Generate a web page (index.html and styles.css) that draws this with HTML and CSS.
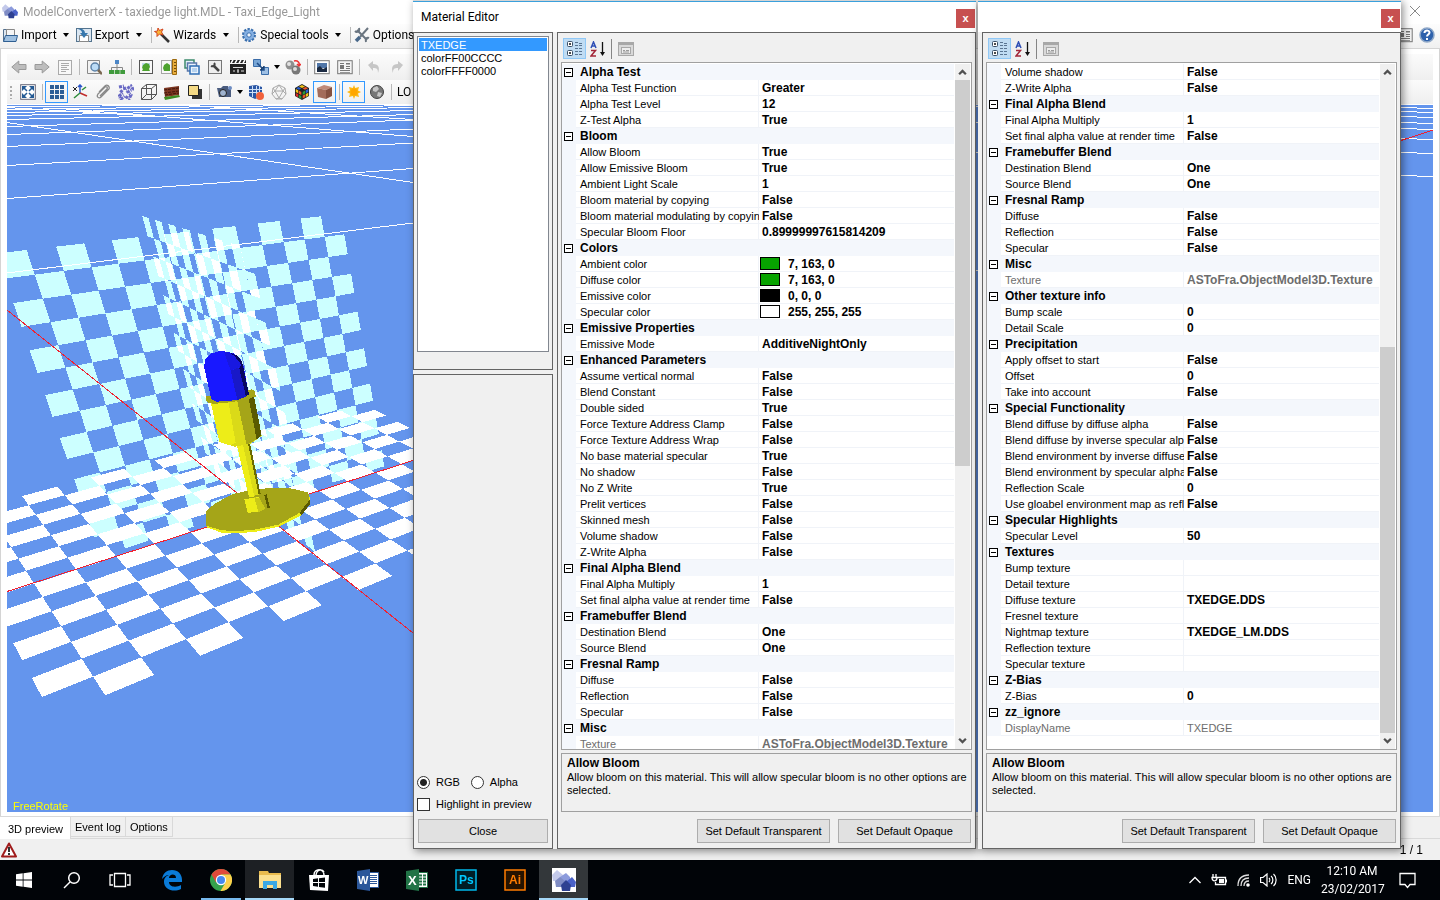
FILE: index.html
```
<!DOCTYPE html>
<html lang="en">
<head>
    <meta charset="UTF-8">
    <meta name="viewport" content="width=device-width, initial-scale=1.0">
    <title>ModelConverterX</title>
    <link rel="stylesheet" href="styles.css">
</head>
<body>
    <svg class="defs" width="0" height="0">
        <symbol id="i-houses" viewBox="0 0 24 24"><path fill="#c3c9ea" d="M0 7l5-5 6 5-1 6H1z"/><path fill="#8c9bdc" d="M8 9l6-4 4 4v7H8z"/><path fill="#7f8cc4" d="M3 13l5-4 5 4v6H4z"/><path fill="#4a62c8" d="M14 14l6-5 4 5-1 5h-8z"/><path fill="#2e4191" d="M9 17l5-5 5 5-1 6h-8z"/></symbol>
        <symbol id="i-cat" viewBox="0 0 18 18"><g fill="#fff" stroke="#3a5068"><rect x="1.500" y="1.500" width="5" height="5" rx="1"/><rect x="1.500" y="10.500" width="5" height="5" rx="1"/></g><path stroke="#111" d="M3 4h2M4 3v2M3 13h2M4 12v2"/><path stroke="#5a7592" stroke-dasharray="3 1" d="M9 2.500h4M9 5.500h8M9 8.500h8M9 11.500h8M9 14.500h8M13 3.500h4"/></symbol>
        <symbol id="i-az" viewBox="0 0 16 16"><path fill="none" stroke="#2f4fb5" stroke-width="1.500" d="M1 7l2.500-6L6 7M2 5h3"/><path fill="none" stroke="#a32638" stroke-width="1.500" d="M1 9.500h4.500L1 15h5"/><path stroke="#111" stroke-width="1.300" d="M12.500 1v12"/><path fill="#111" d="M10 11h5l-2.500 4z"/></symbol>
        <symbol id="i-page" viewBox="0 0 16 16"><rect x=".5" y="1.500" width="15" height="13" fill="#d9d9d9" stroke="#a8a8a8"/><path fill="#a8a8a8" d="M1 2h14v2H1z"/><rect x="3.500" y="6.500" width="9" height="6" fill="#eee" stroke="#a8a8a8"/><path stroke="#999" d="M5 9.500h2M8 9.500h3M5 11h6"/></symbol>
        <symbol id="i-up" viewBox="0 0 8 8"><path fill="none" stroke="#505050" stroke-width="2" d="M1 6l3-3 3 3"/></symbol>
        <symbol id="i-down" viewBox="0 0 8 8"><path fill="none" stroke="#505050" stroke-width="2" d="M1 2l3 3 3-3"/></symbol>
        <symbol id="i-news" viewBox="0 0 16 16"><rect x=".7" y="1.700" width="14.500" height="13" fill="#f4f4f4" stroke="#777"/><path fill="#777" d="M3 4h4v1H3zM3 6h4v4H3zM3 11h10v1H3zM3 13h10v.8H3zM9 4h4v1.500H9zM9 7h4v1H9zM9 9h4v1H9z"/></symbol>
    </svg>

    <div class="desktop">
        <main class="app">
            <header class="app-title">
                <svg class="ico"><use href="#i-houses"/></svg>
                <h1>ModelConverterX - taxiedge light.MDL - Taxi_Edge_Light</h1>
                <button class="app-close" aria-label="Close"><svg viewBox="0 0 12 12" width="12" height="12"><path stroke="#888" d="M1 1l10 10M11 1L1 11"/></svg></button>
            </header>

            <nav class="menu">
                <button><svg class="ico" viewBox="0 0 16 16"><path fill="#dce6f0" stroke="#53708f" d="M1.500 14.500v-12h5l1 2h5v3"/><path fill="#f6f6f6" stroke="#888" d="M4.500 2.500h8v6h-8z"/><path fill="#9fc0e0" stroke="#2f5f92" d="M3.500 8.500h12l-1.500 6H1.500z"/></svg>Import</button><i class="drop"></i>
                <button><svg class="ico" viewBox="0 0 16 16"><rect x=".5" y="1.500" width="15" height="13" fill="#dbe7f2" stroke="#54748f"/><path fill="#fff" stroke="#888" d="M3.500 8.500h9v6h-9z"/><path fill="#3878ad" d="M2 2c4-1 7 1 7 4h3l-4 5-4-5h2c0-2-1-3-4-4z"/></svg>Export</button><i class="drop"></i>
                <i class="sep"></i>
                <button><svg class="ico" viewBox="0 0 16 16"><path stroke="#333" stroke-width="2.500" d="M7 7l8 8"/><path fill="#f8b437" stroke="#d3431d" d="M4 1l1.500 2.500L9 2 7.500 5 9 8 5.500 7 3 9.500 3 6 .5 4.500 3.500 4z"/></svg>Wizards</button><i class="drop"></i>
                <i class="sep"></i>
                <button><svg class="ico" viewBox="0 0 16 16"><circle cx="8" cy="8" r="5.500" fill="#6fa0d8" stroke="#3a6fae" stroke-width="3" stroke-dasharray="2.200 1.200"/><circle cx="8" cy="8" r="5" fill="#85b0e2"/><circle cx="8" cy="8" r="2.200" fill="#eef4fb" stroke="#3a6fae"/></svg>Special tools</button><i class="drop"></i>
                <i class="sep"></i>
                <button><svg class="ico" viewBox="0 0 16 16"><path stroke="#6a7580" stroke-width="2" d="M3 3l10 10M14 1L6 10"/><path stroke="#49688a" stroke-width="3.500" d="M6 10l-4 4"/><path fill="none" stroke="#6a7580" stroke-width="2" d="M1 4c2 2 5 0 4-3M12 15c-1-3 1-5 3-4"/></svg>Options</button>
                <span class="menu-right">
                    <svg class="ico"><use href="#i-news"/></svg>
                    <svg class="ico" viewBox="0 0 16 16"><circle cx="8" cy="8" r="7" fill="#2f62ac" stroke="#8fa8c8" stroke-width="1.500"/><path fill="none" stroke="#fff" stroke-width="2" d="M5.500 6c0-3.500 5-3.200 5-.5 0 2-2.500 2-2.500 4M8 11v2"/></svg>
                </span>
            </nav>

            <div class="workspace">
                <div class="tools">
                    <button><svg class="ico" viewBox="0 0 16 16"><path fill="#bdbdbd" stroke="#999" d="M.8 8l7-6v3.500H15v5H7.800V14z"/></svg></button>
                    <button><svg class="ico" viewBox="0 0 16 16"><path fill="#bdbdbd" stroke="#999" d="M15.200 8l-7-6v3.500H1v5h7.200V14z"/></svg></button>
                    <button><svg class="ico" viewBox="0 0 16 16"><rect x="1.500" y="1.500" width="13" height="14" fill="#f8f8f8" stroke="#aaa"/><path stroke="#aaa" d="M4 4.500h8M4 6.500h8M4 8.500h6M4 10.500h8M4 12.500h5"/></svg></button>
                    <i class="sep"></i>
                    <button><svg class="ico" viewBox="0 0 16 16"><path fill="#f2f2f2" stroke="#888" d="M1.500 1.500h12v13h-12z"/><circle cx="9" cy="8" r="4" fill="#bcdcf6" stroke="#5d83a8" stroke-width="1.500"/><path stroke="#7a6852" stroke-width="2.500" d="M12 11l4 4"/></svg></button>
                    <button><svg class="ico" viewBox="0 0 16 16"><path fill="none" stroke="#888" d="M8 5v3M2.500 11V8.500h11V11M8 8v3"/><path fill="#4c86c6" d="M6 1h4v4H6z"/><path fill="#3f9a3c" d="M0 11h5v4H0zM5.700 11h5v4h-5zM11.300 11H16v4h-4.700z"/></svg></button>
                    <i class="sep"></i>
                    <button><svg class="ico" viewBox="0 0 16 16"><rect x="1.500" y="1.500" width="13" height="13" fill="#f8f8f8" stroke="#555"/><path fill="#bcd9ee" d="M4 4h8v4H4z"/><path fill="#4da22f" d="M4 9l1-3 3-2 3 1 1 3-1 2 1 2H4l1-2z"/></svg></button>
                    <button><svg class="ico" viewBox="0 0 16 16"><rect x=".5" y="1.500" width="10" height="13" fill="#f8f8f8" stroke="#555" stroke-dasharray="1 1"/><path fill="#4da22f" d="M2 9l1-3 3-2 3 2v6H3z"/><path fill="#e9ad3d" stroke="#9c6a10" d="M11.500.5h4v15h-4z"/><path stroke="#704c0a" d="M13 3.500h2M13 6.500h2M13 9.500h2M13 12.500h2"/></svg></button>
                    <button><svg class="ico" viewBox="0 0 16 16"><g fill="#e9f2fb" stroke-width="1.500"><path stroke="#3c8a6c" d="M1 1h9v8H1z"/><path stroke="#5b78aa" d="M3.500 4h9v8h-9z"/><path stroke="#2e6db5" d="M6 7h9v8H6z"/></g><path fill="#b5d2ef" d="M8 9h5v4H8z"/></svg></button>
                    <button><svg class="ico" viewBox="0 0 16 16"><rect x="1.500" y="1.500" width="13" height="13" fill="#eee" stroke="#777"/><path stroke="#444" stroke-width="2.500" d="M7 7l5 5"/><path fill="none" stroke="#444" stroke-width="2" d="M4 7c2 1 5-1 3-3"/></svg></button>
                    <button><svg class="ico" viewBox="0 0 16 16"><path fill="#222" d="M0 5h16v10H0zM0 1h16v3H0z"/><path stroke="#fff" stroke-width="1.500" d="M3 1l-2 3M7 1L5 4M11 1L9 4M15 1l-2 3"/><path stroke="#ddd" d="M3 8.500h10M3 12h2M7 12h2M8 10v4M11 12h3"/></svg></button>
                    <button><svg class="ico" viewBox="0 0 16 16"><path fill="#78a6d6" stroke="#3a6ca8" d="M.5.5h7v7h-7z"/><path fill="#9dbfe4" stroke="#3a6ca8" d="M8.500 8.500h7v7h-7z"/><path stroke="#1f4c86" stroke-width="1.500" d="M4 4l7 7M11 7v4H7"/></svg></button><i class="drop small"></i>
                    <button><svg class="ico" viewBox="0 0 16 16"><circle cx="5" cy="6" r="4.500" fill="#8f8f8f"/><circle cx="4" cy="5" r="2" fill="#e2e2e2"/><circle cx="11" cy="11" r="4.500" fill="#777"/><circle cx="10" cy="10" r="2" fill="#ddd"/><path fill="none" stroke="#e33" stroke-width="1.500" d="M9 2c4-1 6 2 5 5M12 5l2 2 2-2"/></svg></button>
                    <i class="sep"></i>
                    <button><svg class="ico" viewBox="0 0 16 16"><rect x=".7" y="1.700" width="14.500" height="13" fill="#fff" stroke="#777"/><path fill="#5076a8" d="M3 4h10v5H3z"/><path fill="#1b2a42" d="M3 9l3-2 3 3 4-2v5H3z"/></svg></button>
                    <button><svg class="ico"><use href="#i-news"/></svg></button>
                    <i class="sep"></i>
                    <button><svg class="ico" viewBox="0 0 16 16"><path fill="#c6c6c6" d="M2 6l5-4v3c6 0 7 4 5 9 0-4-1-5-5-5v3z"/></svg></button>
                    <button><svg class="ico" viewBox="0 0 16 16"><path fill="#c6c6c6" d="M14 6L9 2v3c-6 0-7 4-5 9 0-4 1-5 5-5v3z"/></svg></button>
                </div>
                <div class="tools">
                    <i class="grip"></i>
                    <button><svg class="ico" viewBox="0 0 16 16"><rect x=".7" y=".7" width="14.600" height="14.600" fill="#fff" stroke="#667"/><path fill="#245a94" d="M2 2h5L2 7zM14 2v5L9 2zM2 14V9l5 5zM14 14H9l5-5z"/><path stroke="#245a94" stroke-width="1.500" d="M4 4l3 3M12 4L9 7M4 12l3-3M12 12L9 9"/></svg></button>
                    <i class="sep"></i>
                    <button class="on"><svg class="ico" viewBox="0 0 16 16"><path fill="#2d5e96" d="M1 1h4v4H1zM6 1h4v4H6zM11 1h4v4h-4zM1 6h4v4H1zM6 6h4v4H6zM11 6h4v4h-4zM1 11h4v4H1zM6 11h4v4H6zM11 11h4v4h-4z"/></svg></button>
                    <button><svg class="ico" viewBox="0 0 16 16"><path stroke="#2a56c8" stroke-width="1.500" d="M8 9V1M6 3l2-2 2 2"/><path stroke="#c12c2c" stroke-width="1.500" d="M8 9l7 3"/><path stroke="#2e8d3b" stroke-width="1.500" d="M8 9l-6 5M10 6l4-3"/><path stroke="#222" d="M1 3l4 4M5 3L1 7"/></svg></button>
                    <button><svg class="ico" viewBox="0 0 16 16"><path fill="none" stroke="#888" stroke-width="1.300" d="M5 12l7-7c1-2-1-3-2-2L3 10c-2 3 1 5 3 3l8-8c1-3-2-5-4-3L4 8"/></svg></button>
                    <button><svg class="ico" viewBox="0 0 16 16"><path fill="none" stroke="#6868c4" stroke-width="3" stroke-dasharray="3 1 1 1" d="M1 3l5-1 1 4 6-4 2 3-5 3 3 3-2 4-4-3-4 3-2-3 4-3-3-3"/></svg></button>
                    <button><svg class="ico" viewBox="0 0 16 16"><path fill="none" stroke="#555" d="M.5 4.500h10v11H.5zM5.500.5h10v10h-10zM.5 4.500l5-4M10.500 4.500l5-4M10.500 15.500l5-5M.5 15.500l5-5"/></svg></button>
                    <button><svg class="ico" viewBox="0 0 16 16"><path fill="#7c3520" d="M0 4l15-2v9L1 13z"/><path fill="#3d8a22" d="M0 13l15-2 1 2-15 3z"/><path stroke="#42170c" stroke-dasharray="3 1" d="M0 6l15-2M0 9l15-2M1 11l14-2"/></svg></button>
                    <button><svg class="ico" viewBox="0 0 16 16"><path fill="#333" d="M5 5h10v10H5z"/><path fill="#f5da85" stroke="#222" d="M1.500 1.500h10v10h-10z"/></svg></button>
                    <i class="sep"></i>
                    <button><svg class="ico" viewBox="0 0 16 16"><path fill="#4b5d80" d="M1 4h4l2-2h5v3h3v8H3z"/><circle cx="7" cy="9" r="3.500" fill="#9fb3cf" stroke="#222"/><circle cx="14" cy="4" r="2" fill="#6d8cc2"/></svg></button><i class="drop small"></i>
                    <button><svg class="ico" viewBox="0 0 16 16"><path fill="#2b57a5" d="M1 2l7-1 6 2v9l-7 3-6-3z"/><path stroke="#cfe0f6" d="M1 5.500h13M1 8.500h13M4.500 2v11M8.500 2v12M11.500 2v11"/><circle cx="12" cy="12" r="4" fill="#f0613c"/></svg></button>
                    <button><svg class="ico" viewBox="0 0 16 16"><path fill="none" stroke="#aaa" d="M8 1l6 3 1 6-4 5H5l-4-5 1-6zM8 1L4 7l-3 3M8 1l4 6 3 3M4 7h8l-4 7zM2 4l2 3M14 4l-2 3M5 15l3-1 3 1"/></svg></button>
                    <button><svg class="ico" viewBox="0 0 16 16"><path fill="#222" d="M8 0l7 4v8l-7 4-7-4V4z"/><path fill="#f4c518" d="M8 1l3 1.500-3 1.500-3-1.500zM1.800 5l2.400 1.200v3L1.800 8z"/><path fill="#f0572a" d="M11.500 3l2.500 1.200-3 1.500L8.500 4.500zM4.800 6.500L7.300 8v3L4.800 9.700zM8.700 11.500l2.500-1.300v3l-2.500 1.400z"/><path fill="#d92a2a" d="M1.800 9l2.400 1.300v3L1.800 12z"/><path fill="#2a62d8" d="M4.500 3l2.700 1.500L5 5.700 2.200 4.300zM11.800 6.300L14.300 5v3l-2.500 1.300z"/><path fill="#2ba03a" d="M8.700 8l2.500-1.400v3L8.700 11zM4.800 10.700l2.500 1.200v3l-2.500-1.300z"/><path fill="#f4c518" d="M11.800 10l2.500-1.300v3L11.800 13z"/></svg></button>
                    <button class="on"><svg class="ico" viewBox="0 0 16 16"><path fill="#c08a78" d="M0 4l7-3 8 2-6 3z"/><path fill="#a36c5a" d="M0 4l9 2v9l-8-2z"/><path fill="#84503f" d="M9 6l6-3v9l-6 3z"/></svg></button>
                    <i class="sep"></i>
                    <button class="on"><svg class="ico" viewBox="0 0 16 16"><path fill="#fdb813" d="M8 1l1.200 3L13 3l-1 3.500L15 8l-3 1.500 1 3.500-3.800-1L8 15l-1.200-3L3 13l1-3.500L1 8l3-1.500L3 3l3.800 1z"/><circle cx="8" cy="8" r="3.500" fill="#ffa600"/></svg></button>
                    <button><svg class="ico" viewBox="0 0 16 16"><circle cx="8" cy="8" r="6.500" fill="#777" stroke="#444"/><path fill="#c6c6c6" d="M4 4l4-2 2 3-3 3-3-1zM9 8l4 1-2 4-3-1z"/></svg></button>
                    <i class="sep"></i>
                    <span class="tool-text">LO</span>
                </div>

                <div class="viewport">
                    <svg id="scene" viewBox="7 105 1426 707" preserveAspectRatio="xMinYMin slice" shape-rendering="crispEdges">
                        <rect class="sky" x="7" y="105" width="1426" height="707"/>
                        <g class="grid-lines">
                            <path d="M7 273L413 223M7 198.500L413 168.500M7 165.500L413 143M7 146.500L413 129M7 134.500L413 120M7 126.500L413 114.500M7 119.500L413 110.500M7 115.500L413 107.500M7 112.500L413 105.500M7 109.500L300 105.500M7 106.500L200 105.500"/>
                            <path d="M7 122.500L413 182.500M60 108.500L413 136.500M190 105.500L413 119.500M7 107.500L150 116"/>
                            <path d="M976 106.500h3M976 122.500h3M976 152.500h3M976 270.500h3M1401 107.500l32 1M1401 111.500l32 1M1401 116.500l32 1M1401 122.500l32 1M1401 128.500l32 1M1401 138.500l32 1M1401 152.500l32 1M1401 175.500l32 1"/>
                        </g>
                        <g id="walls"></g>
                        <g id="floor"></g>
                        <path class="axis" d="M7 591.500L413 460.500M7 310L413 633M1401 140.500L1433 130"/>
                        <!-- taxiway lamp, drawn at 3x -->
                        <g transform="translate(0 440) scale(.33333)">
                            <path fill="#eded18" d="M617 218L620 262L665 278L715 280L770 275L835 260L905 225L929 190V170z"/>
                            <path fill="#a5a518" d="M617 215L645 190L700 162L760 148L830 143L880 146L925 158L929 182L900 218L835 254L770 268L715 273L665 271L619 257z"/>
                            <path fill="#5a5a00" d="M929 180V193L905 225L900 222L903 212zM793 165L800 163L810 203L803 206z"/>
                            <path fill="#eded18" d="M733 178L775 170L787 213L743 219z"/><path fill="#c8c818" d="M763 172L778 174L797 207L775 216z"/>
                            <path fill="#dada18" d="M708 5L745 5L782 162L747 172z"/><path fill="#eded18" d="M708 5L727 5L763 170L747 172z"/><path fill="#6a6a00" d="M743 5L749 5L782 162L776 164z"/>
                        </g>
                        <g transform="translate(0 200) scale(.33333)">
                            <path fill="#dada18" d="M632 605L658 726L705 740L750 732L785 708L758 590z"/>
                            <path fill="#eded18" d="M632 605L658 726L690 736L707 728L685 605z"/>
                            <path fill="#a5a518" d="M712 603L750 592L772 716L740 735z"/>
                            <path fill="#5a5a00" d="M746 597L762 590L785 706L770 718z"/>
                            <path fill="#a5a518" d="M618 588L620 606L640 612L700 606L767 590L765 574L755 568L700 580L640 585z"/>
                            <path fill="#1818ff" d="M612 500L616 478L635 460L665 452L700 460L720 474L730 496L747 583L715 600L650 605L634 598z"/>
                            <path fill="#1818e0" d="M672 455L700 460L725 482L728 496L692 512z"/>
                            <path fill="#1818c8" d="M692 512L722 500L738 590L712 600z"/>
                            <path fill="#080860" d="M690 458L712 467L726 484L747 583L738 590L718 506L724 494L705 470z"/>
                        </g>
                    </svg>
                    <span class="mode">FreeRotate</span>
                </div>
            </div>

            <div class="tabs">
                <button class="active">3D preview</button><button>Event log</button><button>Options</button>
            </div>
            <footer class="status">
                <svg class="ico" viewBox="0 0 16 16"><path fill="#fff" stroke="#a01c1c" stroke-width="2" stroke-linejoin="round" d="M8 1.500L15 14.500H1z"/><path stroke="#333" stroke-width="2" d="M8 5v5M8 11v2"/></svg>
                <span>1 / 1</span>
            </footer>
        </main>

        <section class="dialog editor">
            <header><h2>Material Editor</h2><button class="close" aria-label="Close">x</button></header>
            <div class="dialog-body">
                <div class="side">
                    <div class="panel materials">
                        <ul>
                            <li class="selected">TXEDGE</li>
                            <li>colorFF00CCCC</li>
                            <li>colorFFFF0000</li>
                        </ul>
                    </div>
                    <div class="panel preview">
                        <div class="radios">
                            <label><input type="radio" name="channel" checked>RGB</label>
                            <label><input type="radio" name="channel">Alpha</label>
                        </div>
                        <label><input type="checkbox">Highlight in preview</label>
                        <button class="btn">Close</button>
                    </div>
                </div>
                <div class="panel props">
                    <div class="props-bar">
                        <button class="on"><svg width="18" height="18"><use href="#i-cat"/></svg></button>
                        <button><svg width="16" height="16"><use href="#i-az"/></svg></button>
                        <i></i>
                        <button><svg width="16" height="16"><use href="#i-page"/></svg></button>
                    </div>
                    <div class="props-grid">
                        <table id="props-top"></table>
                        <div class="scroll"><svg><use href="#i-up"/></svg><div class="thumb first"></div><svg><use href="#i-down"/></svg></div>
                    </div>
                    <div class="help"><b>Allow Bloom</b><p>Allow bloom on this material. This will allow specular bloom is no other options are selected.</p></div>
                    <div class="actions"><button class="btn">Set Default Transparent</button><button class="btn">Set Default Opaque</button></div>
                </div>
            </div>
        </section>

        <section class="dialog second">
            <header><button class="close" aria-label="Close">x</button></header>
            <div class="dialog-body">
                <div class="panel props">
                    <div class="props-bar">
                        <button class="on"><svg width="18" height="18"><use href="#i-cat"/></svg></button>
                        <button><svg width="16" height="16"><use href="#i-az"/></svg></button>
                        <i></i>
                        <button><svg width="16" height="16"><use href="#i-page"/></svg></button>
                    </div>
                    <div class="props-grid">
                        <table id="props-bottom"></table>
                        <div class="scroll"><svg><use href="#i-up"/></svg><div class="thumb last"></div><svg><use href="#i-down"/></svg></div>
                    </div>
                    <div class="help"><b>Allow Bloom</b><p>Allow bloom on this material. This will allow specular bloom is no other options are selected.</p></div>
                    <div class="actions"><button class="btn">Set Default Transparent</button><button class="btn">Set Default Opaque</button></div>
                </div>
            </div>
        </section>
    </div>

    <div class="taskbar">
        <button class="sys"><svg width="16" height="16" viewBox="0 0 16 16"><path fill="#fff" d="M0 2.300l6.700-1v6.300H0zM7.500 1.200L16 0v7.600H7.500zM0 8.400h6.700v6.300L0 13.700zM7.500 8.400H16V16l-8.500-1.200z"/></svg></button>
        <button class="sys"><svg width="18" height="18" viewBox="0 0 18 18"><circle cx="11" cy="7" r="5.300" fill="none" stroke="#fff" stroke-width="1.500"/><path stroke="#fff" stroke-width="1.500" d="M7 11l-6 6"/></svg></button>
        <button class="sys"><svg width="22" height="16" viewBox="0 0 22 16"><path fill="none" stroke="#fff" stroke-width="1.300" d="M5.500 1.500h11v13h-11zM4 3H1v10h3M18 3h3v10h-3"/></svg></button>
        <button><svg width="22" height="22" viewBox="0 0 22 22"><path fill="#0a7bd8" d="M1 10C2 4 6 1 11 1c6 0 10 4 10 10v2H8c0 5 7 6 12 3v4c-8 4-17 0-17-7 0-4 2-6 5-7-3 0-5 2-7 4zM8 9h7c0-5-7-4-7 0z"/></svg></button>
        <button class="open"><svg width="22" height="22" viewBox="0 0 22 22"><circle cx="11" cy="11" r="11" fill="#35a24c"/><path fill="#e04a3a" d="M1.500 5.500A11 11 0 0 1 20.500 5.500H11l-5 8z"/><path fill="#fcd04b" d="M20.500 5.500A11 11 0 0 1 10.500 22l5-8.500V9l-4.500-3.500z"/><circle cx="11" cy="11" r="5.200" fill="#fff"/><circle cx="11" cy="11" r="4" fill="#4688ee"/></svg></button>
        <button class="open lit"><svg width="22" height="20" viewBox="0 0 22 20"><path fill="#e9bb4e" d="M0 1h9l1 2h12v5H0z"/><path fill="#fbe08f" d="M0 5h22v13H0z"/><path fill="#3aa9e6" d="M4 19v-8h14v8h-4v-4H8v4z"/></svg></button>
        <button><svg width="22" height="24" viewBox="0 0 22 24"><path fill="none" stroke="#fff" stroke-width="1.500" d="M6 7c0-7 10-7 10 0M8 7c1-6 6-6 8-3"/><path fill="#fff" d="M1 7h20l-1 16-18-1z"/><path fill="#010408" d="M5 11l5-.7V14H5zM11 10.200l6-.8V14h-6zM5 15h5v3.800L5 18zM11 15h6v4.800l-6-.8z"/></svg></button>
        <button><svg width="22" height="22" viewBox="0 0 22 22"><path fill="#fff" stroke="#2b579a" d="M11 3.500h10.500v15H11z"/><path stroke="#2b579a" d="M12 6.500h8M12 8.500h8M12 10.500h8M12 12.500h8M12 14.500h8"/><path fill="#2b579a" d="M0 2l13-2v22L0 20z"/><text class="glyph" x="1" y="15" font-size="11">W</text></svg></button>
        <button><svg width="22" height="22" viewBox="0 0 22 22"><path fill="#fff" stroke="#217346" d="M11 3.500h10.500v15H11z"/><path stroke="#217346" stroke-width="2" stroke-dasharray="3 1" d="M13 6.500h8M13 9.500h8M13 12.500h8M13 15.500h8"/><path fill="#217346" d="M0 2l13-2v22L0 20z"/><text class="glyph" x="2" y="16" font-size="13">X</text></svg></button>
        <button><svg width="22" height="22" viewBox="0 0 22 22"><path fill="#001d26" stroke="#00b8ea" stroke-width="1.500" d="M1 1h20v20H1z"/><text class="ps" x="4" y="15" font-size="12">Ps</text></svg></button>
        <button><svg width="22" height="22" viewBox="0 0 22 22"><path fill="#261300" stroke="#ff7c00" stroke-width="1.500" d="M1 1h20v20H1z"/><text class="ai" x="5" y="15" font-size="12">Ai</text></svg></button>
        <button class="open current"><svg class="tile" width="24" height="24"><use href="#i-houses"/></svg></button>

        <div class="tray">
            <svg width="12" height="8" viewBox="0 0 12 8"><path fill="none" stroke="#fff" stroke-width="1.300" d="M.5 7L6 1.500 11.500 7"/></svg>
            <svg width="16" height="13" viewBox="0 0 16 13"><path fill="none" stroke="#fff" stroke-width="1.300" d="M6 3.500h8.500v7H4.500V8M2 0v3M5 0v3M1 3.500h5C6 8 1 8 1 3.500zM15.500 5.500v3"/><path fill="#fff" d="M8 5h5v4H8z"/></svg>
            <svg width="13" height="13" viewBox="0 0 13 13"><g fill="none" stroke="#ddd" stroke-width="1.300"><path d="M1 12C1 5 5 1 12 1M4 12c0-5 3-8 8-8M7 12c0-3 2-5 5-5"/></g><circle cx="11" cy="11" r="1.800" fill="#fff"/></svg>
            <svg width="17" height="14" viewBox="0 0 17 14"><path fill="none" stroke="#fff" stroke-width="1.200" d="M.6 4.500H3L7 1v12L3 9.500H.6zM9 5c1 1 1 3 0 4M11 3c2.500 2 2.500 6 0 8M13.500 1c3.500 3 3.500 9 0 12"/></svg>
            <span class="lang">ENG</span>
            <time>12:10 AM<br>23/02/2017</time>
            <svg class="note" width="17" height="17" viewBox="0 0 17 17"><path fill="none" stroke="#fff" stroke-width="1.300" d="M1 1.500h15v11h-5l-2.500 3-2.500-3H1z"/></svg>
        </div>
    </div>

    <script src="script.js"></script>
</body>
</html>
```
FILE: styles.css
```
* {
    box-sizing: border-box;
}

body {
    margin: 0;
    height: 100vh;
    display: flex;
    flex-direction: column;
    overflow: hidden;
    background: #f0f0f0;
    color: #000;
    font-family: "Liberation Sans", Arial, sans-serif;
    font-size: 11px;
}

h1, h2, p, ul {
    margin: 0;
    padding: 0;
    font-weight: normal;
}

button {
    margin: 0;
    padding: 0;
    border: 0;
    background: none;
    color: inherit;
    font: inherit;
}

svg {
    display: block;
    flex: none;
}

.defs {
    position: absolute;
}

.ico {
    width: 16px;
    height: 16px;
}

.desktop {
    position: relative;
    flex: 1;
    min-height: 0;
}

/* main window */
.app {
    height: 100%;
    display: flex;
    flex-direction: column;
}

.app-title, .menu, .tool-text, .tray, .dialog h2 {
    font-family: Roboto, sans-serif;
    font-size: 12px;
}

.app-title {
    height: 24px;
    padding: 0 19px 3px 2px;
    display: flex;
    align-items: center;
    gap: 5px;
    background: #fff;
    color: #999;
}

.app-title h1 {
    flex: 1;
    padding-top: 2px;
    font-size: 12px;
}

.menu {
    height: 25px;
    padding: 0 5px 2px 2px;
    display: flex;
    align-items: center;
    border-bottom: 1px solid #d4d4d4;
    background: linear-gradient(#fdfdfd, #f0f0f0);
}

.menu button {
    display: flex;
    align-items: center;
    gap: 3px;
    white-space: nowrap;
}

.drop {
    width: 19px;
    display: flex;
    justify-content: center;
}

.drop::after {
    content: "";
    border: 3px solid transparent;
    border-top: 4px solid #000;
    border-bottom: 0;
}

.drop.small {
    width: 9px;
}

.sep {
    width: 6px;
    height: 16px;
    flex: none;
    background: linear-gradient(#b8b8b8, #b8b8b8) center / 1px 100% no-repeat;
}

.menu-right {
    margin-left: auto;
    display: flex;
    gap: 6px;
}

.workspace {
    flex: 1;
    min-height: 0;
    padding: 5px 6px 4px;
    display: flex;
    flex-direction: column;
    border-left: 1px solid #d4d4d4;
    border-right: 1px solid #d4d4d4;
    background: #fff;
}

.tools {
    height: 26px;
    flex: none;
    display: flex;
    align-items: center;
    background: linear-gradient(#fbfbfb, #efefef);
}

.tools + .tools {
    height: 24px;
    margin-bottom: 1px;
}

.tools button {
    width: 23px;
    height: 22px;
    display: flex;
    align-items: center;
    justify-content: center;
}

.tools button.on {
    border: 1px solid #3399ff;
}

.grip {
    width: 9px;
    height: 14px;
    background: radial-gradient(circle, #aaa 1px, transparent 1px) 2px 0 / 4px 4px repeat-y;
}

.tool-text {
    padding-left: 3px;
}

.viewport {
    position: relative;
    flex: 1;
    min-height: 0;
}

#scene {
    width: 100%;
    height: 100%;
}

.sky {
    fill: #6495ed;
}

.grid-lines, .axis {
    fill: none;
    stroke: #fff;
    stroke-width: 1;
}

.axis {
    stroke: #f02030;
}

/* walls add up to white where they cross */
.wall {
    fill: #686a12;
    mix-blend-mode: plus-lighter;
}

.floor {
    fill: #fff;
}

.mode {
    position: absolute;
    left: 6px;
    bottom: 0;
    line-height: 12px;
    color: #ff0;
}

.tabs {
    height: 23px;
    flex: none;
    display: flex;
    align-items: flex-start;
    border-top: 1px solid #d9d9d9;
    border-bottom: 1px solid #d9d9d9;
}

.tabs button {
    height: 20px;
    padding: 0 4px;
    border-right: 1px solid #d9d9d9;
    border-bottom: 1px solid #d9d9d9;
}

.tabs button.active {
    height: 22px;
    padding: 2px 7px 0 8px;
    border-bottom: 0;
    background: #fff;
}

.status {
    height: 21px;
    flex: none;
    padding: 0 17px 0 1px;
    display: flex;
    align-items: center;
    justify-content: space-between;
    font-size: 12px;
}

/* floating windows */
.dialog {
    position: absolute;
    top: 0;
    height: 849px;
    display: flex;
    flex-direction: column;
    border-top: 1px solid #d4d4d4;
    background: #f0f0f0;
    box-shadow: 2px 2px 8px rgba(0, 0, 0, 0.45);
}

.dialog.editor {
    left: 413px;
    width: 563px;
}

.dialog.second {
    left: 978px;
    width: 423px;
    padding-left: 4px;
}

.dialog header {
    height: 31px;
    flex: none;
    padding: 0 1px 0 8px;
    display: flex;
    align-items: center;
    border-top: 1px solid #3aa0dc;
    background: #fff;
}

.dialog.second header {
    margin-left: -4px;
}

.dialog .close {
    width: 19px;
    height: 19px;
    margin: 3px 0 0 auto;
    background: #c75050;
    color: #fff;
    font-weight: bold;
    line-height: 17px;
}

.dialog-body {
    flex: 1;
    min-height: 0;
    display: flex;
    gap: 4px;
}

.side {
    width: 140px;
    display: flex;
    flex-direction: column;
    gap: 4px;
}

.panel {
    border: 1px solid #646464;
    background: #f0f0f0;
}

.materials {
    height: 338px;
    padding: 3px;
}

.materials ul {
    height: 316px;
    padding: 1px;
    border: 1px solid #828790;
    background: #fff;
    list-style: none;
}

.materials li {
    height: 13px;
    padding-left: 2px;
    line-height: 14px;
}

.materials li.selected {
    background: #3399ff;
    color: #fff;
}

.preview {
    flex: 1;
    padding: 0 4px 5px;
    display: flex;
    flex-direction: column;
    justify-content: flex-end;
    gap: 8px;
}

.preview label {
    display: flex;
    align-items: center;
    gap: 6px;
    height: 14px;
}

.radios {
    display: flex;
    gap: 12px;
}

.preview input {
    appearance: none;
    width: 13px;
    height: 13px;
    margin: 0 0 0 -1px;
    border: 1px solid #333;
    background: #fff;
}

.preview input[type=radio] {
    border-radius: 50%;
}

.preview input:checked {
    background: radial-gradient(circle, #222 3px, #fff 4px);
}

.btn {
    height: 24px;
    border: 1px solid #adadad;
    background: #e1e1e1;
}

.props {
    flex: 1;
    min-width: 0;
    padding: 0 3px 5px;
    display: flex;
    flex-direction: column;
}

.props-bar {
    height: 29px;
    flex: none;
    padding: 2px 2px 0;
    display: flex;
    align-items: center;
}

.props-bar button {
    width: 23px;
    height: 21px;
    display: flex;
    align-items: center;
    justify-content: center;
}

.props-bar button.on {
    border: 1px solid #90c8f6;
    background: #c0dcf3;
}

.props-bar i {
    width: 1px;
    height: 20px;
    margin: 0 2px;
    background: #858585;
}

.props-grid {
    flex: 1;
    min-height: 0;
    padding: 1px 1px 0 0;
    display: flex;
    align-items: flex-start;
    overflow: hidden;
    border: 1px solid #a0a0a0;
    background: #fff;
}

.props-grid table {
    flex: 1;
    width: 0;
    table-layout: fixed;
    border-collapse: separate;
    border-spacing: 0;
}

.props-grid td, .props-grid th {
    height: 16px;
    padding: 0;
    overflow: hidden;
    line-height: 16px;
    text-align: left;
    white-space: nowrap;
}

.gutter {
    width: 14px;
    background: #f4f7fc;
}

.props-grid .cat th {
    padding-left: 4px;
    background: #f4f7fc;
    font-size: 12px;
    line-height: 15px;
}

.box {
    display: block;
    width: 9px;
    height: 9px;
    margin-left: 2px;
    border: 1px solid #000;
    background: linear-gradient(#000, #000) center / 5px 1px no-repeat #fff;
}

.props-grid .name {
    padding-left: 4px;
    box-shadow: inset -1px -1px #f0f3f8;
}

.props-grid .value {
    padding-left: 3px;
    box-shadow: inset 0 -1px #f0f3f8;
    font-size: 12px;
    font-weight: bold;
}

.readonly {
    color: #6d6d6d;
}

.props-grid .plain {
    font-size: 11px;
    font-weight: normal;
}

.swatch {
    display: inline-block;
    width: 20px;
    height: 13px;
    margin: 1px 8px 0 -2px;
    border: 1px solid #000;
    vertical-align: top;
}

.scroll {
    align-self: stretch;
    width: 15px;
    margin-left: 1px;
    display: flex;
    flex-direction: column;
    align-items: center;
    background: #f0f0f0;
}

.scroll svg {
    width: 9px;
    height: 16px;
}

.scroll svg:last-child {
    margin-top: auto;
}

.thumb {
    width: 100%;
    background: #cdcdcd;
}

.thumb.first {
    height: 386px;
}

.thumb.last {
    height: 386px;
    margin-top: auto;
}

.scroll .thumb.last + svg {
    margin-top: 0;
}

.help {
    height: 59px;
    flex: none;
    margin-top: 3px;
    padding: 2px 0 2px 5px;
    border: 1px solid #a0a0a0;
    line-height: 13px;
}

.help b {
    display: block;
    line-height: 15px;
    font-size: 12px;
}

.actions {
    padding: 7px 1px 0 0;
    display: flex;
    justify-content: flex-end;
    gap: 8px;
}

.actions .btn {
    width: 133px;
}

/* taskbar */
.taskbar {
    height: 40px;
    flex: none;
    display: flex;
    background: #010408;
    color: #fff;
}

.taskbar button {
    width: 49px;
    display: flex;
    align-items: center;
    justify-content: center;
}

.taskbar .sys {
    width: 48px;
}

.taskbar .sys + button:not(.sys) {
    margin-left: 3px;
}

.taskbar .open {
    background: linear-gradient(#76b9ed, #76b9ed) center bottom / 40px 2px no-repeat;
}

.taskbar .open.lit {
    background: linear-gradient(#a6d8f8, #a6d8f8) center bottom / 100% 2px no-repeat #1d2024;
}

.taskbar .open.current {
    background: linear-gradient(#a6d8f8, #a6d8f8) center bottom / 100% 2px no-repeat #33373a;
}

.tile {
    background: #fff;
}

.glyph, .ps, .ai {
    fill: #fff;
    font-weight: bold;
}

.ps {
    fill: #00c8ff;
}

.ai {
    fill: #ff7c00;
}

.tray {
    margin-left: auto;
    padding-right: 24px;
    display: flex;
    align-items: center;
    gap: 10px;
}

.tray time {
    width: 62px;
    line-height: 18px;
    text-align: center;
    white-space: nowrap;
}

.note {
    margin-left: 6px;
}
```
FILE: script.js
```
// '#' starts a category, a third item is an option: a swatch colour or a class
const shared = [
    ['Volume shadow', 'False'],
    ['Z-Write Alpha', 'False'],
    ['#Final Alpha Blend'],
    ['Final Alpha Multiply', '1'],
    ['Set final alpha value at render time', 'False'],
    ['#Framebuffer Blend'],
    ['Destination Blend', 'One'],
    ['Source Blend', 'One'],
    ['#Fresnal Ramp'],
    ['Diffuse', 'False'],
    ['Reflection', 'False'],
    ['Specular', 'False'],
    ['#Misc'],
    ['Texture', 'ASToFra.ObjectModel3D.Texture', 'readonly']
];

const topRows = [
    ['#Alpha Test'],
    ['Alpha Test Function', 'Greater'],
    ['Alpha Test Level', '12'],
    ['Z-Test Alpha', 'True'],
    ['#Bloom'],
    ['Allow Bloom', 'True'],
    ['Allow Emissive Bloom', 'True'],
    ['Ambient Light Scale', '1'],
    ['Bloom material by copying', 'False'],
    ['Bloom material modulating by copying', 'False'],
    ['Specular Bloom Floor', '0.89999997615814209'],
    ['#Colors'],
    ['Ambient color', '7, 163, 0', 'rgb(7,163,0)'],
    ['Diffuse color', '7, 163, 0', 'rgb(7,163,0)'],
    ['Emissive color', '0, 0, 0', 'rgb(0,0,0)'],
    ['Specular color', '255, 255, 255', 'rgb(255,255,255)'],
    ['#Emissive Properties'],
    ['Emissive Mode', 'AdditiveNightOnly'],
    ['#Enhanced Parameters'],
    ['Assume vertical normal', 'False'],
    ['Blend Constant', 'False'],
    ['Double sided', 'True'],
    ['Force Texture Address Clamp', 'False'],
    ['Force Texture Address Wrap', 'False'],
    ['No base material specular', 'True'],
    ['No shadow', 'False'],
    ['No Z Write', 'True'],
    ['Prelit vertices', 'False'],
    ['Skinned mesh', 'False'],
    ...shared
];

const bottomRows = [
    ...shared,
    ['#Other texture info'],
    ['Bump scale', '0'],
    ['Detail Scale', '0'],
    ['#Precipitation'],
    ['Apply offset to start', 'False'],
    ['Offset', '0'],
    ['Take into account', 'False'],
    ['#Special Functionality'],
    ['Blend diffuse by diffuse alpha', 'False'],
    ['Blend diffuse by inverse specular alph', 'False'],
    ['Blend environment by inverse diffuse a', 'False'],
    ['Blend environment by specular alpha', 'False'],
    ['Reflection Scale', '0'],
    ['Use gloabel environment map as refle', 'False'],
    ['#Specular Highlights'],
    ['Specular Level', '50'],
    ['#Textures'],
    ['Bump texture', ''],
    ['Detail texture', ''],
    ['Diffuse texture', 'TXEDGE.DDS'],
    ['Fresnel texture', ''],
    ['Nightmap texture', 'TXEDGE_LM.DDS'],
    ['Reflection texture', ''],
    ['Specular texture', ''],
    ['#Z-Bias'],
    ['Z-Bias', '0'],
    ['#zz_ignore'],
    ['DisplayName', 'TXEDGE', 'readonly plain']
];

function fillTable(id, rows) {
    let html = '<colgroup><col style="width:14px"><col style="width:183px"><col></colgroup>';
    for (const [name, value, extra] of rows) {
        if (name[0] === '#') {
            html += `<tr class="cat"><td class="gutter"><button class="box" aria-label="Collapse"></button></td><th colspan="2">${name.slice(1)}</th></tr>`;
            continue;
        }
        const isColor = extra && extra.startsWith('rgb');
        const cls = extra && !isColor ? extra : '';
        const swatch = isColor ? `<span class="swatch" style="background:${extra}"></span>` : '';
        html += `<tr class="${cls.split(' ')[0]}"><td class="gutter"></td><td class="name">${name}</td><td class="value ${cls}">${swatch}${value}</td></tr>`;
    }
    document.getElementById(id).innerHTML = html;
}

// Least squares fit of the 8 homography terms to [u, v, x, y] pairs
function homography(pairs) {
    const rows = [];
    for (const [u, v, x, y] of pairs) {
        rows.push([u, v, 1, 0, 0, 0, -u * x, -v * x, x]);
        rows.push([0, 0, 0, u, v, 1, -u * y, -v * y, y]);
    }
    const m = [];
    for (let i = 0; i < 8; i++) {
        m.push([]);
        for (let k = 0; k < 9; k++) {
            m[i].push(rows.reduce((sum, row) => sum + row[i] * row[k], 0));
        }
    }
    for (let c = 0; c < 8; c++) {
        let p = c;
        for (let r = c + 1; r < 8; r++) {
            if (Math.abs(m[r][c]) > Math.abs(m[p][c])) p = r;
        }
        [m[c], m[p]] = [m[p], m[c]];
        for (let r = 0; r < 8; r++) {
            if (r === c) continue;
            const f = m[r][c] / m[c][c];
            for (let k = c; k < 9; k++) m[r][k] -= f * m[c][k];
        }
    }
    const h = m.map((row, i) => row[8] / row[i]);
    return (u, v) => {
        const w = h[6] * u + h[7] * v + 1;
        return ((h[0] * u + h[1] * v + h[2]) / w).toFixed(1) + ' ' + ((h[3] * u + h[4] * v + h[5]) / w).toFixed(1);
    };
}

// 14 x 14 checkerboard on a plane
function board(parent, cls, parity, pairs) {
    const at = homography(pairs);
    let d = '';
    for (let u = 0; u < 14; u++) {
        for (let v = 0; v < 14; v++) {
            if ((u + v) % 2 !== parity) continue;
            d += `M${at(u, v)}L${at(u + 1, v)}L${at(u + 1, v + 1)}L${at(u, v + 1)}z`;
        }
    }
    const path = document.createElementNS('http://www.w3.org/2000/svg', 'path');
    path.setAttribute('class', cls);
    path.setAttribute('d', d);
    document.getElementById(parent).appendChild(path);
}

fillTable('props-top', topRows);
fillTable('props-bottom', bottomRows);

board('walls', 'wall', 0, [[1, 0, 26.7, 250], [14, 1, 344.3, 234.3], [14, 10, 373, 400.7], [1, 14, 125, 548.3]]);
board('walls', 'wall', 0, [[0, 0, 142.3, 216], [14, 1, 255, 274], [14, 14, 315, 551.7], [0, 12, 201, 436.7]]);
board('floor', 'floor', 1, [
    [0, 1, 44, 697.3], [0, 2, 33.3, 678], [0, 4, 15, 642.7], [1, 0, 102, 696], [2, 0, 153.3, 675.3],
    [4, 0, 243, 638.3], [6, 0, 322.3, 604.3], [8, 0, 393.7, 575.7], [1, 7, 32.7, 583.3], [4, 7, 153.3, 544.3],
    [2, 14, 21.7, 496], [13, 14, 343.3, 410.7], [14, 13, 373.3, 410], [14, 10, 408.7, 427.7]
]);
```
